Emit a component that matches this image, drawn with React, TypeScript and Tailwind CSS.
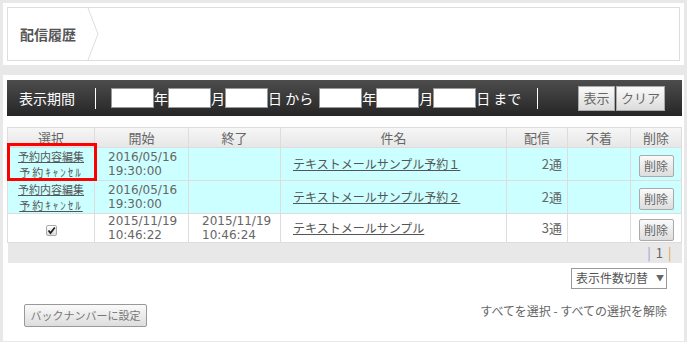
const rows = [
  { start: ['2016/05/16', '19:30:00'], end: null, title: 'テキストメールサンプル予約１', count: '2通', reserved: true, h: 'h-[33px]' },
  { start: ['2016/05/16', '19:30:00'], end: null, title: 'テキストメールサンプル予約２', count: '2通', reserved: true, h: 'h-[32px]' },
  { start: ['2015/11/19', '10:46:22'], end: ['2015/11/19', '10:46:24'], title: 'テキストメールサンプル', count: '3通', reserved: false, h: 'h-[27px]' },
]

function DateCell({ v }: { v: string[] | null }) {
  return (
    <td className="border border-[#dddddd] pl-[13px] font-['DejaVu_Sans',sans-serif] text-[12px] leading-[14px] text-[#666666] align-middle">
      {v && (
        <>
          <div>{v[0]}</div>
          <div>{v[1]}</div>
        </>
      )}
    </td>
  )
}

export default function App() {
  return (
    <div className="min-h-[342px] bg-[#e8e8e8] px-[3px] pt-[3px] pb-[5px] font-['Noto_Sans_CJK_JP','Noto_Sans',sans-serif] text-[#666666]">
      {/* breadcrumb */}
      <div className="bg-white p-[4px]">
        <div className="flex h-[54px] border border-[#dddddd]">
          <div className="flex items-center pl-[12px] pr-[11px] text-[14px] font-bold text-[#555555]">配信履歴</div>
          <svg width="12" height="52" viewBox="0 0 12 52" className="shrink-0">
            <polyline points="1,0 11,26 1,52" fill="none" stroke="#dddddd" strokeWidth="1" />
          </svg>
        </div>
      </div>

      <div className="mt-[10px] bg-white pl-[4px] pr-[2px] pt-[5px] pb-[14px]">
        {/* period filter bar */}
        <div className="flex h-[36px] items-center bg-gradient-to-b from-[#4d4d4d] to-[#262626] pl-[12px] pr-[17px] text-[14px] text-white">
          <span>表示期間</span>
          <span className="ml-[20px] mr-[15px] h-[21px] w-px bg-white" />
          <input className="h-[20px] w-[43px] border border-[#999999] bg-white" />
          <span>年</span>
          <input className="h-[20px] w-[43px] border border-[#999999] bg-white" />
          <span>月</span>
          <input className="h-[20px] w-[43px] border border-[#999999] bg-white" />
          <span className="mr-[6px]">日 から</span>
          <input className="h-[20px] w-[43px] border border-[#999999] bg-white" />
          <span>年</span>
          <input className="h-[20px] w-[43px] border border-[#999999] bg-white" />
          <span>月</span>
          <input className="h-[20px] w-[43px] border border-[#999999] bg-white" />
          <span>日 まで</span>
          <span className="ml-[16px] h-[21px] w-px bg-white" />
          <div className="ml-auto flex">
            <button className="h-[25px] w-[37px] border border-[#aaaaaa] bg-gradient-to-b from-[#fafafa] to-[#dcdcdc] text-[13px] text-[#666666]">表示</button>
            <button className="ml-px h-[25px] w-[49px] border border-[#aaaaaa] bg-gradient-to-b from-[#fafafa] to-[#dcdcdc] text-[13px] text-[#666666]">クリア</button>
          </div>
        </div>

        {/* table */}
        <div className="relative mt-[11px]">
          <table className="w-full table-fixed border-collapse">
            <colgroup>
              <col className="w-[87px]" />
              <col className="w-[94px]" />
              <col className="w-[92px]" />
              <col className="w-[226px]" />
              <col className="w-[61px]" />
              <col className="w-[63px]" />
              <col />
            </colgroup>
            <thead>
              <tr className="h-[20px] bg-gradient-to-b from-[#f6f6f6] to-[#e6e6e6] text-[13px] text-[#666666]">
                {['選択', '開始', '終了', '件名', '配信', '不着', '削除'].map((h) => (
                  <th key={h} className="border border-[#dddddd] p-0 font-normal leading-[18px]">{h}</th>
                ))}
              </tr>
            </thead>
            <tbody>
              {rows.map((r, i) => (
                <tr key={i} className={`${r.h} ${r.reserved ? 'bg-[#ccffff]' : 'bg-white'}`}>
                  <td className="border border-[#dddddd] p-0 text-center align-middle">
                    {r.reserved ? (
                      <div className="flex flex-col items-center text-[11px] leading-[16px]">
                        <a className="text-[#555555] underline">予約内容編集</a>
                        <a className="tracking-[2px] text-[#555555] underline">予約ｷｬﾝｾﾙ</a>
                      </div>
                    ) : (
                      <span className="inline-flex h-[11px] w-[11px] items-center justify-center rounded-[2px] border border-[#aaaaaa] bg-gradient-to-b from-[#ffffff] to-[#dddddd] align-middle">
                        <svg width="9" height="9" viewBox="0 0 9 9">
                          <path d="M1.5 4.5 L3.5 7 L7.8 1.5" fill="none" stroke="#222222" strokeWidth="1.8" />
                        </svg>
                      </span>
                    )}
                  </td>
                  <DateCell v={r.start} />
                  <DateCell v={r.end} />
                  <td className="border border-[#dddddd] pl-[12px] text-[12px]">
                    <a className="text-[#555555] underline">{r.title}</a>
                  </td>
                  <td className="border border-[#dddddd] pr-[5px] text-right text-[13px]">{r.count}</td>
                  <td className="border border-[#dddddd]"></td>
                  <td className="border border-[#dddddd] text-center">
                    <button className="h-[22px] w-[35px] rounded-[2px] border border-[#aaaaaa] bg-gradient-to-b from-[#fafafa] to-[#dddddd] text-[12px] text-[#666666]">削除</button>
                  </td>
                </tr>
              ))}
              <tr className="h-[20px] bg-[#e8e8e8]">
                <td colSpan={7} className="pr-[10px] text-right text-[13px] leading-[18px]">
                  <span className="text-[#9999cc]">|</span>
                  <span className="mx-[5px] text-[#666666]">1</span>
                  <span className="text-[#e0a040]">|</span>
                </td>
              </tr>
            </tbody>
          </table>
          {/* highlight */}
          <div className="absolute left-0 top-[16px] h-[38px] w-[90px] border-[3px] border-[#ff0000]" />
        </div>

        {/* controls */}
        <div className="mt-[5px] flex justify-end pr-[15px]">
          <div className="flex h-[21px] w-[96px] items-center border border-[#999999] bg-white pl-[4px] text-[12px] text-[#555555]">
            表示件数切替
            <span className="ml-[8px] text-[8px] text-[#666666]">▼</span>
          </div>
        </div>
        <div className="mt-[15px] flex items-start justify-between pl-[17px] pr-[15px]">
          <button className="h-[23px] w-[123px] rounded-[2px] border border-[#999999] bg-gradient-to-b from-[#fafafa] to-[#dddddd] text-[11px] text-[#777777]">バックナンバーに設定</button>
          <div className="text-[12px] leading-[13px] text-[#666666]">すべてを選択 - すべての選択を解除</div>
        </div>
      </div>
    </div>
  )
}
